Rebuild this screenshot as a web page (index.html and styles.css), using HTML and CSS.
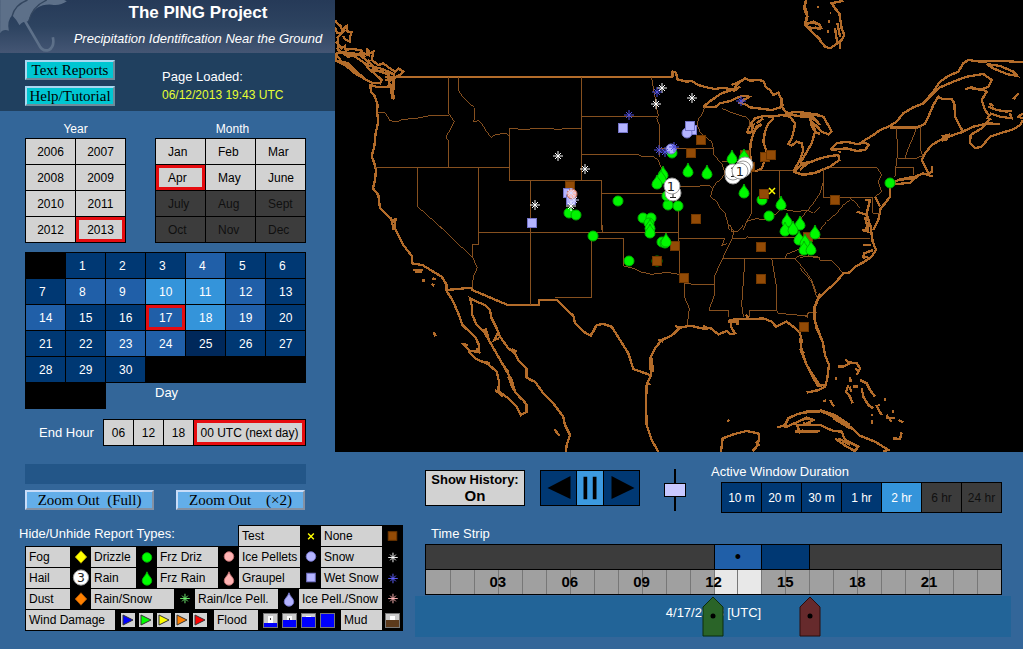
FILE: index.html
```html
<!DOCTYPE html>
<html lang="en">
<head>
<meta charset="utf-8">
<title>The PING Project</title>
<link rel="stylesheet" href="styles.css">
</head>
<body>
<div class="top">
  <aside class="side">
    <header class="banner">
      <svg class="umbrella" viewBox="0 0 200 159" aria-hidden="true">
        <path d="M0 100Q8 86 26 92Q20 62 36 46Q50 60 58 76Q66 64 84 64Q90 40 110 24Q130 12 155 14Q180 18 200 4L192 0H0Z" fill="#5d7089"/>
        <path d="M82 0Q44 14 36 48M140 0Q95 20 86 64" fill="none" stroke="#33465f" stroke-width="4"/>
        <path d="M70 55L116 134Q126 156 146 150Q164 140 158 112" fill="none" stroke="#5d7089" stroke-width="8"/>
      </svg>
      <div class="banner-text">
        <h1>The PING Project</h1>
        <p>Precipitation Identification Near the Ground</p>
      </div>
    </header>
    <div class="info">
      <div class="info-buttons">
        <button class="raised cyan">Text Reports</button>
        <button class="raised cyan">Help/Tutorial</button>
      </div>
      <div class="loaded">Page Loaded:<br><time>06/12/2013 19:43 UTC</time></div>
    </div>
    <div class="pickers">
      <section>
        <h2>Year</h2>
        <div class="cells two">
          <button>2006</button><button>2007</button><button>2008</button><button>2009</button>
          <button>2010</button><button>2011</button><button>2012</button><button class="on">2013</button>
        </div>
      </section>
      <section>
        <h2 class="month">Month</h2>
        <div class="cells three">
          <button>Jan</button><button>Feb</button><button>Mar</button>
          <button class="on">Apr</button><button>May</button><button>June</button>
          <button class="off">July</button><button class="off">Aug</button><button class="off">Sept</button>
          <button class="off">Oct</button><button class="off">Nov</button><button class="off">Dec</button>
        </div>
      </section>
    </div>
    <div class="cells days">
      <span></span><button class="d1">1</button><button class="d1">2</button><button class="d1">3</button><button class="d2">4</button><button class="d1">5</button><button class="d1">6</button>
      <button class="d1">7</button><button class="d2">8</button><button class="d2">9</button><button class="d3">10</button><button class="d3">11</button><button class="d2">12</button><button class="d1">13</button>
      <button class="d2">14</button><button class="d1">15</button><button class="d1">16</button><button class="d2 on">17</button><button class="d3">18</button><button class="d2">19</button><button class="d1">20</button>
      <button class="d1">21</button><button class="d1">22</button><button class="d2">23</button><button class="d2">24</button><button class="d0">25</button><button class="d1">26</button><button class="d1">27</button>
      <button class="d1">28</button><button class="d1">29</button><button class="d1">30</button>
    </div>
    <div class="day-foot"><span class="blank"></span><span>Day</span></div>
    <div class="end-hour">
      <span>End Hour</span>
      <div class="cells hours"><button>06</button><button>12</button><button>18</button><button class="on">00 UTC (next day)</button></div>
    </div>
  </aside>

  <main class="map">
    <svg viewBox="335 0 688 452" role="img" aria-label="Report map">
      <defs>
        <g id="star"><path d="M0-5V5M-5 0H5M-3-3L3 3M-3 3L3-3" fill="none" stroke="currentColor"/></g>
        <path id="drop" d="M0-7C1-3 5-1 5 2.500A5 4.500 0 0 1-5 2.500C-5-1-1-3 0-7Z"/>
        <circle id="dot" r="5"/>
        <rect id="sq" x="-4.500" y="-4.500" width="9" height="9"/>
        <g id="hail"><circle r="8" fill="#fff" stroke="#999"/></g>
      </defs>
      <g class="line">
        <g transform="translate(335 0) scale(.33333)">
          <path class="coast" d="M180 231H780M0 60L8 72 15 75 22 90 35 78 38 95 50 97 45 110V125L30 118 25 108M0 80L6 100 15 100 30 90 8 112 10 120 8 145 20 160 55 160 85 165 75 155 100 165 95 145 105 160 115 155 110 180 130 195 145 190 165 205 180 215 190 205 205 215 195 225 180 232 150 232M3 125L20 145 30 138 32 150 50 146 80 152 88 172M8 150L40 170 70 162 100 185 115 200 135 205 160 215 180 225M20 155L85 168M0 180L30 195 60 220 95 240 110 248 135 250 140 240 120 222 100 205 90 190 60 170 30 160 5 160 0 180M5 165L20 185 40 190 70 220 85 232M12 180L50 206 90 236M102 178L96 195 110 200M110 205L165 225M115 212L140 215 165 228M105 255L130 262 160 262 165 235 175 245 172 275 178 298M150 240L178 236 176 262 162 250M160 240L168 265 172 298M105 252L108 275 120 290 128 315 126 335 130 365 122 400 118 440 110 468 118 490 123 510 120 540 114 565 130 585 135 625 160 650 175 665 182 655 178 690M168 652L176 690"/>
          <path d="M130 337L150 338 165 362 185 365 205 358 245 355 285 347H342M341 232V340L358 365 345 390 333 410 341 425V502M120 502H523M248 502V620L327 690M431 502V690M371 232V273L385 293 418 323 420 345 416 365 432 362 445 378 455 395 468 412 485 403 515 400 523 408M523 385H545L550 388 655 385 660 388H680L684 385H740V542H523ZM587 542V690M740 232V385M740 349H780M740 463H780M740 541H780"/>
        </g>
        <g transform="translate(590 0) scale(.33333)">
          <path class="coast" d="M0 231H247L248 215 258 218 262 238 290 245 305 243 325 255 350 262 375 267 400 263 430 270 445 250 465 235 480 242 505 240 520 243 528 262 540 270 550 285 565 278 575 300 578 318M340 320L365 300 395 280 430 268M425 255L460 240M430 275L450 260M340 320L375 322 390 310 420 303 455 288 478 290 450 308 470 315 480 322 520 327 545 330 578 320M575 295L572 315 590 340 620 335 655 340 690 345M585 342L640 350 670 352 690 375M580 328L600 345M660 350L664 375 675 395 690 402M470 400L480 375 495 355 520 348 545 350 575 345 600 350 615 370 612 390 605 415 595 432 605 437 620 425 635 430 640 450 630 480 610 515M478 380L490 375 485 395 475 400M500 370L520 355M495 390L515 372 500 380 490 400 482 430 480 460 484 490 490 512 500 513 515 505 525 480 530 455 520 425 525 395 535 370 550 355M610 515L640 525 690 515M610 515L640 490 665 485 690 475M648 0L642 25 652 50 646 75 665 95 690 118M646 75L665 67 690 75M655 82L690 86"/>
          <path d="M185 232L190 265 197 300 200 325 205 345 200 355 208 375V470M0 349H205M0 463H145L155 470 190 470 205 480 212 500 225 530 235 560 250 590 265 610V690M208 445H370M345 320L335 345 325 355 322 375 330 395 345 410 365 425 370 445 372 465 385 480 395 490 405 520 395 535 378 550 368 565 362 590 380 605 390 625 405 640 412 665 418 690M395 325L430 340 470 352 480 365 475 385M395 485H480M240 560H275L360 557 368 565M0 541H35V690M35 580H240M485 512V640L470 665 460 690M500 512H610M568 512V595M468 665L500 655 520 660 545 650 560 640 575 625 590 630 620 635 650 630 670 640 690 620"/>
        </g>
        <g transform="translate(800 0) scale(.33333)">
          <path class="coast" d="M18 0L15 20 22 45 15 72 35 95 55 115 75 140 90 145 105 135 125 120 133 105 125 85 118 40 105 25 95 10 130 2M15 72L40 65 60 75 65 88M20 78L35 85 50 82M52 22h5M85 65h6M90 40h4M80 95h6M105 85L112 130M112 70L120 110M120 120V148M0 340L45 345 70 350 90 385 95 395 85 403 65 395 50 378 40 370 45 395 35 430 15 465 0 490M0 350H30L45 362M0 523L40 520 90 500 118 480 115 465 80 470 50 478 20 492 0 510M120 460L118 452M92 450L110 430 140 425 170 432 195 428 207 435 195 450 170 453 140 445 92 450M180 430L195 420 220 405 240 390 265 380 290 365 310 340 340 322 370 310 400 275 420 245 445 228 475 215 490 190 505 180 540 185 600 182 669 187M370 312L400 280 420 262 460 245 500 230 550 222 575 240 565 260 540 270 515 262 495 268M515 265L550 270 560 275 545 300 555 330 570 350M565 320L590 330 620 335 635 332M568 310L580 318M570 340L600 350 635 355 630 340M669 340L655 350 669 355M640 298L655 280M560 192L600 198 640 215 652 228 620 222 580 205ZM669 360L660 375 640 388 600 400 570 410 545 440 525 445 510 430 512 405 545 385 560 370 600 372M560 352L570 358 555 372 520 380 488 395 460 405 430 415 395 435 375 460 365 480 375 500 385 520 397 515 395 497M425 410L445 405 440 418 425 422M398 530L370 520 345 530 300 538 285 545M270 383H350L360 378 375 372 385 350 400 315 415 290 430 298 455 297 463 310 465 350 480 380 490 395 480 400M285 553L330 548 345 535 290 540M270 560V590L255 610 242 625 235 660 220 690M225 590L240 620M195 600L210 600 200 640 208 670 195 690M170 635L200 645 215 690M195 650L205 690"/>
          <path d="M290 385L293 475M350 383L340 410 325 445 315 475M362 378V450L368 470M293 475H350L365 468M290 475L285 530M287 502H340V525M70 505V592H215M90 502H230L245 525 235 545 245 575 225 590M70 545L60 580 40 610 15 640 0 660M150 600L130 615 110 640 80 665 60 690M150 595L165 605 180 625M218 592V640H240"/>
        </g>
        <g transform="translate(335 225) scale(.33333)">
          <path class="coast" d="M175 0L190 30 205 60 232 95V115L262 120 295 140 320 155 335 180V198L352 225 370 265 382 300 420 335 432 360 430 380 405 378 385 358 398 360M400 378L420 400 460 418 485 440 492 470 490 498 520 520 545 545 558 570 575 560V540L560 520 540 500 530 465 510 430 490 395 470 360 450 325 425 300 412 270 410 240 405 220 425 230 450 240 465 255 470 280 485 310 495 335 520 370 540 385 550 405 575 430V458L600 470 625 505 655 535 685 575 690 600 705 630 695 660 693 680M445 312L460 340M452 310L462 345M490 320L478 345 492 340M425 370L435 385M450 410L465 415M500 415L520 440M520 455L535 495M545 505L560 525M480 495L505 515M233 135H265M240 140H262M262 167h8M292 160l10 3M290 176l8 6M296 322l6 12M658 612l15 20M530 372L545 380M580 462L600 470M335 195L410 188 412 195 518 240H612V225H665L690 250 715 272 720 295 745 320 768 332 780 310"/>
          <path d="M310 0L412 97M431 0V60L412 57V95L427 128 415 155 412 190M431 22H770V217H660M587 0V240M765 22H780"/>
        </g>
        <g transform="translate(590 225) scale(.33333)">
          <path class="coast" d="M0 335L20 300 40 297 65 305 90 345 115 385 130 432 180 450M205 680L185 645 170 600 168 540 170 480 183 450 180 400 195 370 215 345 245 332 270 308 300 302 345 312 360 308 385 328 410 318 420 328 435 325 425 310 420 285 450 282 480 283 520 280 545 290 558 305 590 290 610 305 630 325 635 345 632 375 650 420 665 450 685 485M690 330L675 290 672 250 690 205M650 503L690 495M255 302L268 308M340 302L355 312M205 345L220 350M172 470L180 480M186 400L188 440M415 290L440 290M445 285L442 300M468 268L475 280M630 370L642 385M645 410L655 430M393 680L398 640 430 628 470 618 505 625 508 640 500 665 488 678M498 650L508 662M412 585L418 590M562 608L585 600 595 580 620 568 650 560 690 560M590 605L625 590 650 578 670 585 640 600 620 600 630 622 640 615M640 595L670 600 690 600M615 620L690 618M570 602L590 605"/>
          <path d="M0 22H265M0 40H101V123L130 130 150 140 185 148 230 142 268 148M5 40V217M38 0V22M265 0V60L270 95V148L283 160V215L298 250 292 300M283 176L320 178H375M268 40H405L395 62 412 55M418 0L432 20 425 45 405 85 375 150V205L357 255M357 256H415V275M398 100H615M425 40H465L472 36 580 38H690M465 100L455 240 460 275M545 100L560 190V256M480 275V256H560L565 265 645 272 652 278 655 262H680M615 100L640 130 665 165 680 205M615 100L630 92 660 95 690 98M585 98L590 88 610 80 640 65 665 40M422 0L425 20 445 18 460 0"/>
        </g>
        <g transform="translate(800 225) scale(.33333)">
          <path class="coast" d="M212 0L215 30 218 50 228 75 215 95 190 112 165 125 150 142 130 145 105 175 75 200 55 220 45 245 42 275 50 310 68 350 75 390 87 420 82 460 75 485 55 495 20 503M0 340L5 375 20 420 45 460 60 482 75 480M188 60H212M190 98L192 85 220 75M190 98L205 95M185 15L205 20 200 0M115 425L130 425 150 415 135 403M150 412L170 415 180 430 170 450M165 430L178 440M108 455V465M150 455L152 470M160 485H175M180 465L200 475 210 495 225 515M145 480L138 500 150 515 158 535M148 485L155 500M185 490L190 515 205 540 220 550M228 540L245 570M235 540H240M255 520V528M70 530L78 525M90 525L102 545M212 570H218M217 585V598M260 570L275 590M258 580H285M295 585L310 592M280 640L300 642 305 622M275 560H282M0 565L60 557 100 575 150 605 180 632 225 650 265 675 250 680M60 555L105 570 150 600M100 580L150 610M0 585L30 580M0 600L60 600 100 618 125 620 135 645 175 665 165 678 140 665 105 640M115 640L150 660M0 620H55"/>
          <path d="M0 38L45 40H210M0 98L25 93 55 95 62 107H95L128 142M0 130L35 170 50 215M0 271H20L22 280 23 263H40"/>
        </g>
      </g>
      <g fill="#00f400" stroke="#00b000">
        <use href="#dot" x="618" y="201"/><use href="#dot" x="672" y="153"/><use href="#dot" x="668" y="205"/><use href="#dot" x="678" y="206"/><use href="#dot" x="667" y="196"/><use href="#dot" x="762" y="200"/><use href="#dot" x="769" y="216"/><use href="#dot" x="643" y="218"/><use href="#dot" x="651" y="218"/><use href="#dot" x="649" y="223"/><use href="#dot" x="593" y="236"/><use href="#dot" x="629" y="261"/><use href="#dot" x="657" y="261"/><use href="#dot" x="662" y="242"/><use href="#dot" x="665" y="243"/><use href="#dot" x="569" y="213"/><use href="#dot" x="576" y="215"/><use href="#dot" x="890" y="183"/>
      </g>
      <g fill="#934b06" stroke="#713800">
        <use href="#sq" x="701" y="140"/><use href="#sq" x="691" y="153"/><use href="#sq" x="745" y="155"/><use href="#sq" x="765" y="157"/><use href="#sq" x="771" y="155"/><use href="#sq" x="750" y="167"/><use href="#sq" x="764" y="194"/><use href="#sq" x="696" y="219"/><use href="#sq" x="835" y="200"/><use href="#sq" x="675" y="246"/><use href="#sq" x="657" y="261"/><use href="#sq" x="684" y="278"/><use href="#sq" x="761" y="247"/><use href="#sq" x="761" y="279"/><use href="#sq" x="804" y="327"/><use href="#sq" x="808" y="237"/><use href="#sq" x="570" y="186"/>
      </g>
      <g fill="#00fa00" stroke="#00b400">
        <use href="#drop" x="732" y="157"/><use href="#drop" x="744" y="156"/><use href="#drop" x="688" y="170"/><use href="#drop" x="707" y="172"/><use href="#drop" x="744" y="191"/><use href="#drop" x="781" y="203"/><use href="#drop" x="663" y="173"/><use href="#drop" x="661" y="177"/><use href="#drop" x="657" y="182"/><use href="#drop" x="787" y="220"/><use href="#drop" x="800" y="223"/><use href="#drop" x="785" y="229"/><use href="#drop" x="793" y="228"/><use href="#drop" x="815" y="232"/><use href="#drop" x="799" y="238"/><use href="#drop" x="805" y="241"/><use href="#drop" x="804" y="248"/><use href="#drop" x="811" y="248"/><use href="#drop" x="650" y="226"/><use href="#drop" x="650" y="231"/><use href="#drop" x="666" y="240"/>
      </g>
      <g fill="#b4b4ff" stroke="#7474c8">
        <use href="#sq" x="623" y="128"/><use href="#sq" x="692" y="130"/><use href="#dot" x="687" y="133"/><use href="#sq" x="690" y="126"/><use href="#sq" x="532" y="223"/><use href="#dot" x="671" y="149"/><use href="#sq" x="568" y="193"/><use href="#sq" x="571" y="200"/>
      </g>
      <circle cx="572" cy="194" r="5" fill="#ffb4a8" stroke="#b06a60"/>
      <g color="#fff">
        <use href="#star" x="558" y="156"/><use href="#star" x="585" y="169"/><use href="#star" x="535" y="205"/><use href="#star" x="662" y="88"/><use href="#star" x="656" y="104"/><use href="#star" x="692" y="98"/><use href="#star" x="571" y="206"/>
      </g>
      <g color="#d8d8ff"><use href="#star" x="571" y="193"/><use href="#star" x="574" y="200"/></g>
      <g color="#5050e0">
        <use href="#star" x="657" y="92"/><use href="#star" x="629" y="115"/><use href="#star" x="659" y="150"/><use href="#star" x="665" y="152"/><use href="#star" x="674" y="147"/><use href="#star" x="741" y="101"/>
      </g>
      <path d="M769 188L775 194M769 194L775 188" stroke="#ff0" stroke-width="1.500"/>
      <use href="#hail" x="673" y="193"/><path d="M670 197.500H676M673 194V197" stroke="#222"/>
      <use href="#hail" x="672" y="186"/><text class="num" x="671" y="191">1</text>
      <use href="#hail" x="733" y="176"/><use href="#hail" x="745" y="165"/><use href="#hail" x="743" y="169"/>
      <use href="#hail" x="733" y="172"/><path d="M731 176.500H735M731 168.500L733 167.500V176" fill="none" stroke="#222"/>
      <use href="#hail" x="740" y="171"/><text class="num" x="740" y="176">1</text>
    </svg>
  </main>
</div>

<div class="bottom">
  <section class="left">
    <div class="message"></div>
    <div class="zoom"><button class="raised sky">Zoom Out&nbsp; (Full)</button><button class="raised sky">Zoom Out&nbsp;&nbsp;&nbsp; (×2)</button></div>
    <div class="legend-wrap">
      <h3>Hide/Unhide Report Types:</h3>
      <div class="legend">
        <div class="row first">
          <button class="w3">Test<svg viewBox="0 0 21 21"><path d="M8 8L14 14M8 14L14 8" stroke="#ff0" stroke-width="1.500"/></svg></button>
          <button class="w3">None<svg viewBox="0 0 21 21"><rect x="6" y="6" width="9" height="9" fill="#934b06" stroke="#713800"/></svg></button>
        </div>
        <div class="row">
          <button class="w1">Fog<svg viewBox="0 0 21 21"><path d="M11 4L17 10.500L11 17L5 10.500Z" fill="#ff0" stroke="#a90"/></svg></button>
          <button class="w2">Drizzle<svg viewBox="0 0 21 21"><use href="#dot" x="11" y="11" fill="#0f0" stroke="#00b000"/></svg></button>
          <button class="w3">Frz Driz<svg viewBox="0 0 21 21"><use href="#dot" x="11" y="10" fill="#ffb4b4" stroke="#c07070"/></svg></button>
          <button class="w3">Ice Pellets<svg viewBox="0 0 21 21"><use href="#dot" x="11" y="10" fill="#b4b4ff" stroke="#7474c8"/></svg></button>
          <button class="w3">Snow<svg viewBox="0 0 21 21" color="#fff"><use href="#star" x="11" y="11"/></svg></button>
        </div>
        <div class="row">
          <button class="w1">Hail<svg viewBox="0 0 21 21"><use href="#hail" x="11" y="10"/><text class="num" x="11" y="15">3</text></svg></button>
          <button class="w2">Rain<svg viewBox="0 0 21 21"><use href="#drop" x="11" y="11" fill="#0f0" stroke="#00b400"/></svg></button>
          <button class="w3">Frz Rain<svg viewBox="0 0 21 21"><use href="#drop" x="11" y="11" fill="#ffb4b4" stroke="#c07070"/></svg></button>
          <button class="w3">Graupel<svg viewBox="0 0 21 21"><use href="#sq" x="11" y="10" fill="#b4b4ff" stroke="#7474c8"/></svg></button>
          <button class="w3">Wet Snow<svg viewBox="0 0 21 21" color="#6060ff"><use href="#star" x="11" y="11"/></svg></button>
        </div>
        <div class="row">
          <button class="w1">Dust<svg viewBox="0 0 21 21"><path d="M11 4L17 10.500L11 17L5 10.500Z" fill="#ff8000" stroke="#a50"/></svg></button>
          <button class="w4">Rain/Snow<svg viewBox="0 0 21 21" color="#70f070"><use href="#star" x="11" y="10"/></svg></button>
          <button class="w4">Rain/Ice Pell.<svg viewBox="0 0 21 21"><use href="#drop" x="11" y="11" fill="#b4b4ff" stroke="#7474c8"/></svg></button>
          <button class="w4">Ice Pell./Snow<svg viewBox="0 0 21 21" color="#ffb4b4"><use href="#star" x="11" y="10"/></svg></button>
        </div>
        <div class="row">
          <button class="w5">Wind Damage<svg class="wind" viewBox="0 0 99 20">
            <path d="M6 3h14v14h-14zM24 3h14v14h-14zM42 3h14v14h-14zM60 3h14v14h-14zM78 3h14v14h-14z" fill="#d2d2d2"/>
            <g stroke="#333"><path d="M8 5L18 10L8 15Z" fill="#00f"/><path d="M26 5L36 10L26 15Z" fill="#0f0"/><path d="M44 5L54 10L44 15Z" fill="#ff0"/><path d="M62 5L72 10L62 15Z" fill="#ff8000"/><path d="M80 5L90 10L80 15Z" fill="#f00"/></g></svg></button>
          <button class="w6">Flood<svg class="flood" viewBox="0 0 83 20">
            <path d="M5 3h15v15h-15zM24 3h15v15h-15zM43 3h15v15h-15zM62 3h15v15h-15z" fill="#777"/>
            <path d="M6 4h13v13h-13zM25 4h13v13h-13zM44 4h13v13h-13zM63 4h13v13h-13z" fill="#ccc"/>
            <path d="M10 6h5v7h-5zM29 6h5v6h-5zM48 6h5v2h-5z" fill="#fff"/><path d="M12 8h1v2h-1zM31 8h1v2h-1z" fill="#444"/>
            <path d="M6 13h13v4h-13zM25 10h13v7h-13zM44 7h13v10h-13zM63 4h13v13h-13z" fill="#00f"/></svg></button>
          <button class="w7">Mud<svg viewBox="0 0 21 20"><path d="M3 3h15v15h-15z" fill="#777"/><path d="M4 4h13v6h-13z" fill="#ccc"/><path d="M8 6h5v5h-5z" fill="#fff"/><path d="M4 10h13v7h-13z" fill="#5c3a1c"/></svg></button>
        </div>
      </div>
    </div>
  </section>
  <section class="right">
    <div class="controls">
      <button class="history">Show History:<b>On</b></button>
      <div class="player">
        <button aria-label="Back"><svg viewBox="0 0 34 34"><path d="M6 17L29 5V28Z"/></svg></button>
        <button class="active" aria-label="Pause"><svg viewBox="0 0 28 34"><path d="M7 5h4v24h-4zM17 5h4v24h-4z"/></svg></button>
        <button aria-label="Forward"><svg viewBox="0 0 34 34"><path d="M30 17L7 5V28Z"/></svg></button>
      </div>
      <input class="speed" type="range" aria-label="Speed" value="50">
      <div class="duration">
        <h3>Active Window Duration</h3>
        <div class="cells dur"><button class="d1">10 m</button><button class="d1">20 m</button><button class="d1">30 m</button><button class="d1">1 hr</button><button class="d3">2 hr</button><button class="off">6 hr</button><button class="off">24 hr</button></div>
      </div>
    </div>
    <h3 class="strip-title">Time Strip</h3>
    <div class="strip">
      <div class="spans"><i></i><i class="now">•</i><i class="next"></i><i></i></div>
      <div class="hours-row">
        <div class="ticks"><i></i><i></i><i></i><i></i><i></i><i></i><i></i><i></i><i></i><i></i><i></i><i></i><i class="lit"></i><i class="lit"></i><i></i><i></i><i></i><i></i><i></i><i></i><i></i><i></i><i></i><i></i></div>
        <b class="h3">03</b><b class="h6">06</b><b class="h9">09</b><b class="h12">12</b><b class="h15">15</b><b class="h18">18</b><b class="h21">21</b>
      </div>
    </div>
    <div class="dates">
      <span class="date">4/17/2013 [UTC]</span>
      <svg class="pin start" viewBox="0 0 22 41"><path d="M11 1L21 11V40H1V11Z" fill="#2a6428" stroke="#0c2c0c"/><circle cx="11" cy="20" r="2.500"/></svg>
      <svg class="pin end" viewBox="0 0 22 41"><path d="M11 1L21 11V40H1V11Z" fill="#662a2c" stroke="#2c0c0c"/><circle cx="11" cy="20" r="2.500"/></svg>
    </div>
  </section>
</div>
</body>
</html>
```
FILE: styles.css
```css
* { box-sizing: border-box; }
body {
  margin: 0;
  min-height: 100vh;
  background: #336699;
  color: #fff;
  font: 13px/18px "Liberation Sans", Arial, sans-serif;
}
h1, h2, h3, p { margin: 0; font-weight: normal; font-size: 13px; }
button { margin: 0; padding: 0; border: 0; font: inherit; color: #000; background: #d2d2d2; }
svg { display: block; }

.top { display: flex; }
.side { flex: none; width: 335px; padding-bottom: 6px; }
.map { flex: 1; background: #000; }
.map svg { width: 100%; }

.banner { display: flex; height: 53px; background: linear-gradient(#263a58, #2d4360 50%, #445674); }
.umbrella { flex: none; width: 67px; height: 53px; }
.banner-text { flex: 1; margin-left: -6px; text-align: center; white-space: nowrap; }
.banner h1 { font: bold 17px/26px "Liberation Sans", Arial, sans-serif; }
.banner p { font: italic 13px/26px "Liberation Sans", Arial, sans-serif; }

.info { display: flex; gap: 47px; height: 58px; padding: 7px 25px 0; background: #20405f; }
.info-buttons { display: flex; flex-direction: column; gap: 6px; }
.raised { width: 90px; height: 20px; border: 2px outset #a8d8f0; font: 15px/16px "Liberation Serif", serif; }
.cyan { background: #00c6d2; }
.sky { width: 129px; background: #63aee9; border-color: #c8dcf8; }
.loaded { padding-top: 8px; }
.loaded time { color: #e6ff32; font-size: 12px; }

.pickers { display: flex; justify-content: space-between; padding: 9px 29px 0 25px; text-align: center; }
.pickers h2 { line-height: 18px; font-size: 12px; }
.pickers .month { padding-left: 4px; }
.cells { display: grid; grid-auto-rows: 25px; gap: 1px; padding: 1px; background: #000; font-size: 12px; }
.two { grid-template-columns: repeat(2, 49px); }
.three { grid-template-columns: repeat(3, 49px); }
.three button { padding-left: 12px; text-align: left; }
.cells .on { outline: 3px solid #e60c10; outline-offset: -3px; }
.cells .off { background: #3c3c3c; color: #101010; }
.days { grid-template-columns: repeat(7, 39px); margin: 9px 29px 0 25px; }
.days button { padding-left: 13px; text-align: left; }
.cells .d0 { background: #00285a; color: #fff; }
.cells .d1 { background: #003873; color: #fff; }
.cells .d2 { background: #205fa8; color: #fff; }
.cells .d3 { background: #3494da; color: #fff; }
.day-foot { display: flex; gap: 49px; padding-left: 25px; line-height: 20px; }
.blank { width: 81px; height: 26px; background: #000; }
.end-hour { display: flex; justify-content: space-between; align-items: center; padding: 10px 29px 0 39px; }
.hours { grid-template-columns: repeat(3, 29px) 111px; }

.bottom { display: flex; }
.left { flex: none; width: 415px; padding: 12px 0 0 25px; }
.message { width: 281px; height: 20px; background: #235688; }
.zoom { display: flex; gap: 22px; padding: 6px 0 15px; }
.legend-wrap { display: grid; width: 378px; }
.legend-wrap h3 { grid-area: 1 / 1; margin-left: -6px; }
.legend { grid-area: 1 / 1; display: flex; flex-direction: column; align-items: flex-end; }
.row { display: flex; padding: 1px 0 0 1px; background: #000; }
.row:last-child { padding-bottom: 1px; }
.row button { display: flex; justify-content: space-between; height: 20px; padding-left: 3px; font-size: 12px; line-height: 21px; white-space: nowrap; }
.row svg { flex: none; width: 21px; height: 20px; background: #000; }
.row .wind { width: 99px; }
.row .flood { width: 83px; }
.w1 { width: 65px; }
.w2 { width: 66px; }
.w3 { width: 82px; }
.w4 { width: 104px; }
.w5 { width: 188px; }
.w6 { width: 127px; }
.w7 { width: 62px; }
.num { font: 13px "DejaVu Sans", sans-serif; text-anchor: middle; fill: #222; }
.line path { fill: none; stroke: #86501f; stroke-width: 3; shape-rendering: crispEdges; }
.line .coast { stroke: #b36c2a; stroke-width: 7; }

.right { flex: 1; padding-right: 12px; }
.controls { display: flex; align-items: flex-start; height: 72px; padding: 10px 9px 0 10px; }
.history { width: 100px; height: 36px; margin-top: 8px; border: 1px solid #000; font: bold 13px/16px "Liberation Sans", sans-serif; }
.history b { display: block; font-size: 15px; }
.player { display: flex; margin: 8px 0 0 15px; border: 1px solid #000; background: #003873; }
.player button { width: 35px; height: 34px; background: none; }
.player .active { width: 28px; background: #3c9ae0; border: solid #000; border-width: 0 1px; }
.player svg { width: 100%; height: 34px; }
.speed { appearance: none; writing-mode: vertical-lr; width: 22px; height: 42px; margin: 7px 0 0 24px; background: linear-gradient(#000, #000) center / 2px 100% no-repeat; }
.speed::-webkit-slider-thumb { appearance: none; width: 22px; height: 14px; border: 1px solid #000; background: #c8c8ff; }
.duration { margin-left: auto; }
.duration h3 { margin-left: -10px; line-height: 20px; }
.dur { grid-template-columns: repeat(7, 39px); grid-auto-rows: 29px; }
.strip-title { margin-left: 16px; line-height: 20px; }
.strip { margin: 0 9px 0 10px; border: 1px solid #000; color: #000; }
.spans { display: grid; grid-template-columns: 12fr 2fr 2fr 8fr; height: 25px; border-bottom: 1px solid #000; background: #3c3c3c; font-size: 18px; line-height: 24px; text-align: center; }
.spans i { font-style: normal; }
.spans i + i { border-left: 1px solid #000; }
.now { background: #205fa8; }
.next { background: #003873; }
.hours-row, .ticks, .dates { display: grid; grid-template-columns: repeat(24, 1fr); }
.hours-row { height: 24px; font-size: 15px; line-height: 24px; text-align: center; }
.hours-row b { grid-row: 1; }
.ticks { grid-area: 1 / 1 / 2 / 25; background: #a0a0a0; }
.ticks i + i { border-left: 1px solid #777; }
.ticks .lit { background: #e8e8e8; }
.h3 { grid-column: 3 / 5; }
.h6 { grid-column: 6 / 8; }
.h9 { grid-column: 9 / 11; }
.h12 { grid-column: 12 / 14; }
.h15 { grid-column: 15 / 17; }
.h18 { grid-column: 18 / 20; }
.h21 { grid-column: 21 / 23; }
.dates { margin-top: 1px; height: 41px; padding: 0 9px 0 10px; background: #226498; }
.date { grid-area: 1 / 9 / 2 / 17; line-height: 34px; text-align: center; font-size: 13px; }
.pin { width: 22px; height: 41px; justify-self: center; }
.start { grid-area: 1 / 12 / 2 / 14; }
.end { grid-area: 1 / 16 / 2 / 18; }
```
